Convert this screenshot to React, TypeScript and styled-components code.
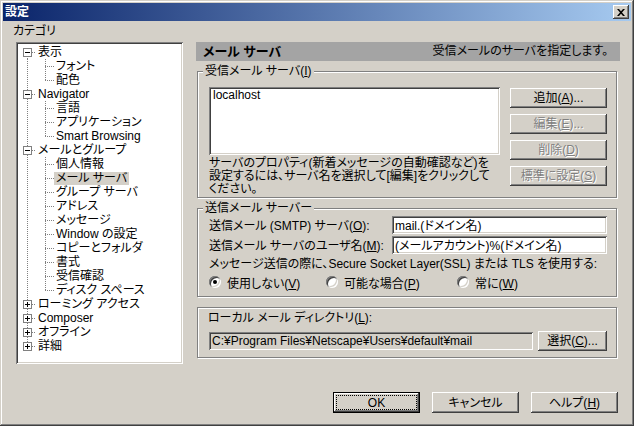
import React from 'react';
import styled, { createGlobalStyle } from 'styled-components';

const GlobalStyle = createGlobalStyle`
  html, body {
    margin: 0;
    padding: 0;
    background: #d4d0c8;
  }
  body {
    font-family: "Liberation Sans", "Noto Sans CJK JP", sans-serif;
    font-size: 12px;
    color: #000;
    font-feature-settings: "palt";
  }
  * {
    box-sizing: border-box;
  }
`;

const raised = 'inset -1px -1px #404040, inset 1px 1px #fff, inset -2px -2px #808080, inset 2px 2px #d4d0c8';
const sunken = 'inset 1px 1px #808080, inset -1px -1px #fff, inset 2px 2px #404040, inset -2px -2px #d4d0c8';

type TreeNode = { label: string; open?: boolean; children?: string[] };

const tree: TreeNode[] = [
  { label: '表示', open: true, children: ['フォント', '配色'] },
  { label: 'Navigator', open: true, children: ['言語', 'アプリケーション', 'Smart Browsing'] },
  {
    label: 'メールとグループ',
    open: true,
    children: [
      '個人情報', 'メール サーバ', 'グループ サーバ', 'アドレス', 'メッセージ',
      'Window の設定', 'コピーとフォルダ', '書式', '受信確認', 'ディスク スペース',
    ],
  },
  { label: 'ローミング アクセス' },
  { label: 'Composer' },
  { label: 'オフライン' },
  { label: '詳細' },
];

const SELECTED = 'メール サーバ';

const App = () => {
  const rows: React.ReactNode[] = [];
  tree.forEach((node, i) => {
    const first = i === 0;
    const last = i === tree.length - 1;
    rows.push(
      <TreeRow key={node.label}>
        <Gutter $line={first ? 'bottom' : last ? 'top' : 'full'} $branch={14}>
          <ExpandBox $open={!!node.open} />
        </Gutter>
        <NodeLabel>{node.label}</NodeLabel>
      </TreeRow>
    );
    if (node.open && node.children) {
      node.children.forEach((child, j) => {
        const lastChild = j === node.children!.length - 1;
        rows.push(
          <TreeRow key={node.label + child}>
            <Gutter $line={last ? 'none' : 'full'} />
            <Gutter $line={lastChild ? 'top' : 'full'} $branch={9} />
            <NodeLabel $selected={child === SELECTED}>{child}</NodeLabel>
          </TreeRow>
        );
      });
    }
  });

  return (
    <>
      <GlobalStyle />
      <Window>
        <TitleBar>
          <Title>設定</Title>
          <CloseButton aria-label="閉じる">
            <svg width="8" height="7" viewBox="0 0 8 7">
              <path d="M0 0h2l2 2.3L6 0h2L5 3.5 8 7H6L4 4.7 2 7H0l3-3.5z" fill="#000" />
            </svg>
          </CloseButton>
        </TitleBar>

        <Body>
          <MainRow>
            <LeftColumn>
              <CategoryLabel>カテゴリ</CategoryLabel>
              <TreeBox>{rows}</TreeBox>
            </LeftColumn>

            <RightColumn>
              <PanelHeader>
                <PanelTitle>メール サーバ</PanelTitle>
                <span>受信メールのサーバを指定します。</span>
              </PanelHeader>

              <Group>
                <Legend>受信メール サーバ(<u>I</u>)</Legend>
                <IncomingRow>
                  <ListColumn>
                    <ListBox>localhost</ListBox>
                    <HelpText>
                      サーバのプロパティ(新着メッセージの自動確認など)を<br />
                      設定するには、サーバ名を選択して[編集]をクリックして<br />
                      ください。
                    </HelpText>
                  </ListColumn>
                  <ButtonColumn>
                    <Button>追加(<u>A</u>)...</Button>
                    <Button disabled>編集(<u>E</u>)...</Button>
                    <Button disabled>削除(<u>D</u>)</Button>
                    <Button disabled>標準に設定(<u>S</u>)</Button>
                  </ButtonColumn>
                </IncomingRow>
              </Group>

              <Group>
                <Legend>送信メール サーバー</Legend>
                <FieldRow>
                  <FieldLabel>送信メール (SMTP) サーバ(<u>O</u>):</FieldLabel>
                  <TextField $w={217} readOnly value="mail.(ドメイン名)" />
                </FieldRow>
                <FieldRow>
                  <FieldLabel>送信メール サーバのユーザ名(<u>M</u>):</FieldLabel>
                  <TextField $w={217} readOnly value="(メールアカウント)%(ドメイン名)" />
                </FieldRow>
                <SslText>メッセージ送信の際に、Secure Socket Layer(SSL) または TLS を使用する:</SslText>
                <RadioRow>
                  <RadioOption $w={117}>
                    <RadioDot $checked />
                    <span>使用しない(<u>V</u>)</span>
                  </RadioOption>
                  <RadioOption $w={131}>
                    <RadioDot />
                    <span>可能な場合(<u>P</u>)</span>
                  </RadioOption>
                  <RadioOption>
                    <RadioDot />
                    <span>常に(<u>W</u>)</span>
                  </RadioOption>
                </RadioRow>
              </Group>

              <Group $plain>
                <GroupLabel>ローカル メール ディレクトリ(<u>L</u>):</GroupLabel>
                <DirRow>
                  <TextField $w={326} $gray readOnly value="C:¥Program Files¥Netscape¥Users¥default¥mail" />
                  <Button $w={69}>選択(<u>C</u>)...</Button>
                </DirRow>
              </Group>
            </RightColumn>
          </MainRow>

          <DialogButtons>
            <Button $w={87} $h={21} $default>
              <FocusRing>OK</FocusRing>
            </Button>
            <Button $w={87} $h={21}>キャンセル</Button>
            <Button $w={87} $h={21}>ヘルプ(<u>H</u>)</Button>
          </DialogButtons>
        </Body>
      </Window>
    </>
  );
};

const Window = styled.div`
  width: 634px;
  height: 426px;
  padding: 3px;
  background: #d4d0c8;
  box-shadow: inset -1px -1px #404040, inset 1px 1px #d4d0c8, inset -2px -2px #808080, inset 2px 2px #fff;
  display: flex;
  flex-direction: column;
`;

const TitleBar = styled.div`
  height: 18px;
  display: flex;
  align-items: center;
  justify-content: space-between;
  padding: 0 2px;
  background: linear-gradient(to right, #0a246a, #a6caf0);
`;

const Title = styled.span`
  color: #fff;
  font-weight: bold;
  line-height: 18px;
`;

const CloseButton = styled.button`
  width: 16px;
  height: 14px;
  padding: 0;
  border: none;
  background: #d4d0c8;
  box-shadow: ${raised};
  display: flex;
  align-items: center;
  justify-content: center;
`;

const Body = styled.div`
  flex: 1;
  display: flex;
  flex-direction: column;
  padding: 0 11px 0 13px;
`;

const MainRow = styled.div`
  display: flex;
  gap: 13px;
`;

const LeftColumn = styled.div`
  width: 167px;
  display: flex;
  flex-direction: column;
`;

const CategoryLabel = styled.div`
  height: 21px;
  line-height: 21px;
  margin-left: -3px;
`;

const TreeBox = styled.div`
  height: 322px;
  padding: 3px 0 0 2px;
  background: #fff;
  box-shadow: ${sunken};
`;

const TreeRow = styled.div`
  height: 14px;
  display: flex;
  align-items: center;
  white-space: nowrap;
`;

const dotsV = 'repeating-linear-gradient(to bottom, #808080 0 1px, transparent 1px 2px)';
const dotsH = 'repeating-linear-gradient(to right, #808080 0 1px, transparent 1px 2px)';

const lineLayer = (line: string) => {
  switch (line) {
    case 'full':
      return { img: dotsV, size: '1px 14px', pos: '9px 0' };
    case 'top':
      return { img: dotsV, size: '1px 7px', pos: '9px 0' };
    case 'bottom':
      return { img: dotsV, size: '1px 7px', pos: '9px 7px' };
    default:
      return null;
  }
};

const Gutter = styled.span<{ $line: string; $branch?: number }>`
  width: 18px;
  height: 14px;
  flex: none;
  display: flex;
  align-items: center;
  padding-left: 5px;
  background-repeat: no-repeat;
  ${(p) => {
    const layers: { img: string; size: string; pos: string }[] = [];
    const v = lineLayer(p.$line);
    if (v) layers.push(v);
    if (p.$branch !== undefined) {
      layers.push({ img: dotsH, size: `${18 - p.$branch}px 1px`, pos: `${p.$branch}px 7px` });
    }
    if (!layers.length) return '';
    return `
      background-image: ${layers.map((l) => l.img).join(', ')};
      background-size: ${layers.map((l) => l.size).join(', ')};
      background-position: ${layers.map((l) => l.pos).join(', ')};
    `;
  }}
`;

const ExpandBox = styled.span<{ $open: boolean }>`
  width: 9px;
  height: 9px;
  border: 1px solid #808080;
  background-color: #fff;
  background-repeat: no-repeat;
  background-position: center;
  background-image: linear-gradient(#000, #000)
    ${(p) => (p.$open ? '' : ', linear-gradient(#000, #000)')};
  background-size: 5px 1px ${(p) => (p.$open ? '' : ', 1px 5px')};
`;

const NodeLabel = styled.span<{ $selected?: boolean }>`
  padding: 0 2px;
  line-height: 13px;
  background: ${(p) => (p.$selected ? '#d4d0c8' : 'transparent')};
`;

const RightColumn = styled.div`
  width: 424px;
  padding-top: 21px;
  display: flex;
  flex-direction: column;
`;

const PanelHeader = styled.div`
  height: 19px;
  display: flex;
  align-items: center;
  justify-content: space-between;
  padding: 0 12px 0 7px;
  background: #a4a4a4;
  line-height: 19px;
`;

const PanelTitle = styled.span`
  font-weight: bold;
  font-size: 13px;
`;

const Group = styled.fieldset<{ $plain?: boolean }>`
  margin: ${(p) => (p.$plain ? '10px' : '3px')} 3px 0 1px;
  padding: ${(p) => (p.$plain ? '3px 9px 6px 11px' : '0 9px 1px 11px')};
  min-width: 0;
  border: 1px solid #808080;
  box-shadow: inset 1px 1px #fff, 1px 1px #fff;
`;

const Legend = styled.legend`
  margin-left: -6px;
  padding: 0 2px;
  line-height: 14px;
  background: #d4d0c8;
`;

const GroupLabel = styled.div`
  line-height: 14px;
  margin-left: -1px;
`;

const IncomingRow = styled.div`
  display: flex;
  justify-content: space-between;
  padding-top: 9px;
`;

const ListColumn = styled.div`
  width: 291px;
  display: flex;
  flex-direction: column;
`;

const ListBox = styled.div`
  height: 68px;
  padding: 2px 4px;
  line-height: 12px;
  background: #fff;
  box-shadow: ${sunken};
`;

const HelpText = styled.div`
  margin-top: 2px;
  line-height: 13px;
  white-space: nowrap;
`;

const ButtonColumn = styled.div`
  display: flex;
  flex-direction: column;
  gap: 6px;
  padding-top: 1px;
`;

const Button = styled.button<{ $w?: number; $h?: number; $default?: boolean }>`
  width: ${(p) => p.$w ?? 97}px;
  height: ${(p) => p.$h ?? 20}px;
  padding: ${(p) => (p.$default ? '2px' : '0')};
  font: inherit;
  line-height: 14px;
  color: #000;
  background: #d4d0c8;
  border: ${(p) => (p.$default ? '1px solid #000' : 'none')};
  box-shadow: ${raised};
  display: inline-flex;
  align-items: center;
  justify-content: center;
  flex: none;
  white-space: nowrap;

  &:disabled {
    color: #808080;
    text-shadow: 1px 1px 0 #fff;
  }
`;

const FocusRing = styled.span`
  flex: 1;
  align-self: stretch;
  display: flex;
  align-items: center;
  justify-content: center;
  border: 1px dotted #000;
`;

const FieldRow = styled.div`
  height: 18px;
  display: flex;
  align-items: center;
  padding-top: 1px;
  & + & {
    margin-top: 2px;
  }
`;

const FieldLabel = styled.span`
  width: 183px;
  flex: none;
  white-space: nowrap;
`;

const TextField = styled.input<{ $w: number; $gray?: boolean }>`
  width: ${(p) => p.$w}px;
  height: 18px;
  padding: 0 2px 0 3px;
  font: inherit;
  color: #000;
  border: none;
  outline: none;
  background: ${(p) => (p.$gray ? '#d4d0c8' : '#fff')};
  box-shadow: ${sunken};
`;

const SslText = styled.div`
  margin-top: 3px;
  line-height: 16px;
  white-space: nowrap;
`;

const RadioRow = styled.div`
  height: 16px;
  margin-top: 2px;
  margin-bottom: 5px;
  display: flex;
  align-items: center;
`;

const RadioOption = styled.label<{ $w?: number }>`
  width: ${(p) => (p.$w ? `${p.$w}px` : 'auto')};
  display: flex;
  align-items: center;
  gap: 6px;
  white-space: nowrap;
`;

const RadioDot = styled.span<{ $checked?: boolean }>`
  width: 12px;
  height: 12px;
  flex: none;
  border-radius: 50%;
  background: #fff;
  box-shadow: inset 1px 1px #808080, inset -1px -1px #fff, inset 2px 2px #404040, inset -2px -2px #d4d0c8;
  display: flex;
  align-items: center;
  justify-content: center;

  &::after {
    content: '';
    width: 4px;
    height: 4px;
    border-radius: 50%;
    background: ${(p) => (p.$checked ? '#000' : 'transparent')};
  }
`;

const DirRow = styled.div`
  height: 20px;
  margin-top: 6px;
  display: flex;
  align-items: center;
  gap: 5px;
`;

const DialogButtons = styled.div`
  display: flex;
  justify-content: flex-end;
  gap: 12px;
  margin-top: 28px;
  padding-right: 2px;
`;

export default App;
